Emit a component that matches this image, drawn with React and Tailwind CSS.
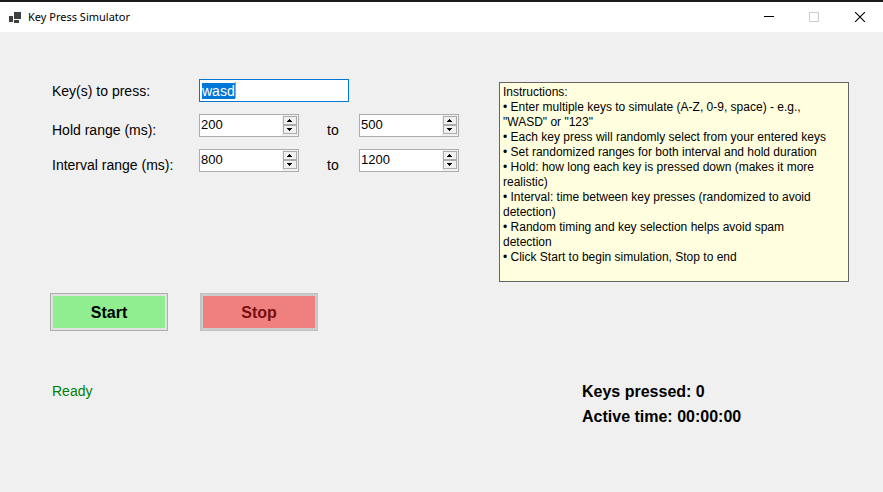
import { useEffect, useRef } from "react";

function Spinner({ id, label, value }) {
  const input = useRef(null);
  const step = (delta) => {
    input.current.value = String(Math.max(0, Number(input.current.value) + delta));
  };
  const button =
    "flex h-[9px] w-[14px] items-center border border-[#acacac] bg-[#f0f0f0] pl-[3px] active:bg-[#cce4f7]";
  return (
    <div className="flex h-[23px] w-[100px] justify-between border border-[#abadb3] bg-white">
      <input
        id={id}
        aria-label={label}
        inputMode="numeric"
        defaultValue={value}
        ref={input}
        className="h-5 w-[78px] bg-transparent pl-px text-[13px] leading-5 outline-none"
      />
      <div className="flex w-4 flex-col items-start bg-[#f0f0f0] py-px pl-px">
        <button type="button" aria-label={`Increase ${label}`} className={button} onClick={() => step(1)}>
          <svg width="5" height="3" viewBox="0 0 5 3" shapeRendering="crispEdges">
            <path d="M2 0h1v1h1v1h1v1H0V2h1V1h1z" />
          </svg>
        </button>
        <button type="button" aria-label={`Decrease ${label}`} className={button} onClick={() => step(-1)}>
          <svg width="5" height="3" viewBox="0 0 5 3" shapeRendering="crispEdges">
            <path d="M0 0h5v1H4v1H3v1H2V2H1V1H0z" />
          </svg>
        </button>
      </div>
    </div>
  );
}

function RangeRow({ id, label, min, max }) {
  return (
    <div className="flex h-[23px] items-start">
      <label htmlFor={id} className="w-[147px] pt-2 leading-4">
        {label}
      </label>
      <Spinner id={id} label={`${label} minimum`} value={min} />
      <span className="w-[60px] pt-2 pl-7 leading-4">to</span>
      <Spinner id={`${id}-max`} label={`${label} maximum`} value={max} />
    </div>
  );
}

const instructions = [
  '• Enter multiple keys to simulate (A-Z, 0-9, space) - e.g., "WASD" or "123"',
  "• Each key press will randomly select from your entered keys",
  "• Set randomized ranges for both interval and hold duration",
  "• Hold: how long each key is pressed down (makes it more realistic)",
  "• Interval: time between key presses (randomized to avoid detection)",
  "• Random timing and key selection helps avoid spam detection",
  "• Click Start to begin simulation, Stop to end",
];

export default function App() {
  const keys = useRef(null);
  useEffect(() => {
    keys.current.focus();
    keys.current.select();
  }, []);

  return (
    <div className="flex min-h-screen flex-col bg-[#f0f0f0] font-['Liberation_Sans',Arial,sans-serif] text-[14px] text-black">
      <header className="flex h-8 items-center border-t-2 border-[#1c1a1c] bg-white font-['Noto_Sans','Open_Sans',sans-serif]">
        <svg className="ml-[9px] shrink-0" width="12" height="11" viewBox="0 0 12 11" shapeRendering="crispEdges" fill="#404040">
          <path d="M0 4h4v6H0zM5 0h7v7H5zM5 8h5v3H5z" />
        </svg>
        <h1 className="ml-[7px] grow text-[11px] leading-4">Key Press Simulator</h1>
        <button type="button" aria-label="Minimize" className="flex h-full w-[45px] items-center justify-center">
          <svg width="10" height="10" viewBox="0 0 10 10" shapeRendering="crispEdges">
            <path d="M0 4h10v1H0z" />
          </svg>
        </button>
        <button type="button" aria-label="Maximize" disabled className="flex h-full w-[46px] items-center justify-center">
          <svg width="10" height="10" viewBox="0 0 10 10" fill="none" stroke="#cccccc">
            <path d="M.5.5h9v9h-9z" />
          </svg>
        </button>
        <button type="button" aria-label="Close" className="flex h-full w-[46px] items-center justify-center">
          <svg width="10" height="10" viewBox="0 0 10 10" fill="none" stroke="#000" strokeWidth="1.1">
            <path d="M0 0l10 10M10 0L0 10" />
          </svg>
        </button>
      </header>

      <main className="grid grid-cols-[1fr_350px] pt-[47px] pr-[34px]">
        <form className="pl-[50px]" onSubmit={(e) => e.preventDefault()}>
          <div className="flex flex-col gap-3 pl-[2px]">
            <div className="flex items-start">
              <label htmlFor="keys" className="w-[147px] pt-1 leading-4">
                Key(s) to press:
              </label>
              <div className="relative">
                <input
                  id="keys"
                  ref={keys}
                  defaultValue="wasd"
                  className="block h-[23px] w-[150px] border border-[#0078d7] bg-white px-[2px] text-[14px] leading-4 outline-none selection:bg-[#0078d7] selection:text-white"
                />
                <span className="absolute top-[3px] left-9 h-4 w-px bg-[#ff8728]" />
              </div>
            </div>
            <RangeRow id="hold" label="Hold range (ms):" min="200" max="500" />
            <RangeRow id="interval" label="Interval range (ms):" min="800" max="1200" />
          </div>
          <div className="mt-[121px] flex gap-8 text-[16px] font-bold">
            <button type="button" className="h-[38px] w-[118px] border border-[#adadad] bg-[#e1e1e1] p-[2px]">
              <span className="flex h-full items-center justify-center bg-[#90ee90] pt-px">Start</span>
            </button>
            <button type="button" disabled className="h-[38px] w-[118px] border border-[#bfbfbf] bg-[#cccccc] p-[2px] text-[#780f0f]">
              <span className="flex h-full items-center justify-center bg-[#f08080] pt-px">Stop</span>
            </button>
          </div>
        </form>

        <section className="mt-[3px] h-[200px] border border-[#646464] bg-[#ffffe0] pt-[2px] pr-4 pl-[3px] text-[12px] leading-[15px]">
          <h2>Instructions:</h2>
          <ul>
            {instructions.map((line) => (
              <li key={line}>{line}</li>
            ))}
          </ul>
        </section>

        <p role="status" className="mt-[52px] pl-[52px] leading-4 text-[#008000]">
          Ready
        </p>
        <div className="mt-12 pl-[83px] text-[16px] leading-[25px] font-bold">
          <p>Keys pressed: 0</p>
          <p>Active time: 00:00:00</p>
        </div>
      </main>
    </div>
  );
}
